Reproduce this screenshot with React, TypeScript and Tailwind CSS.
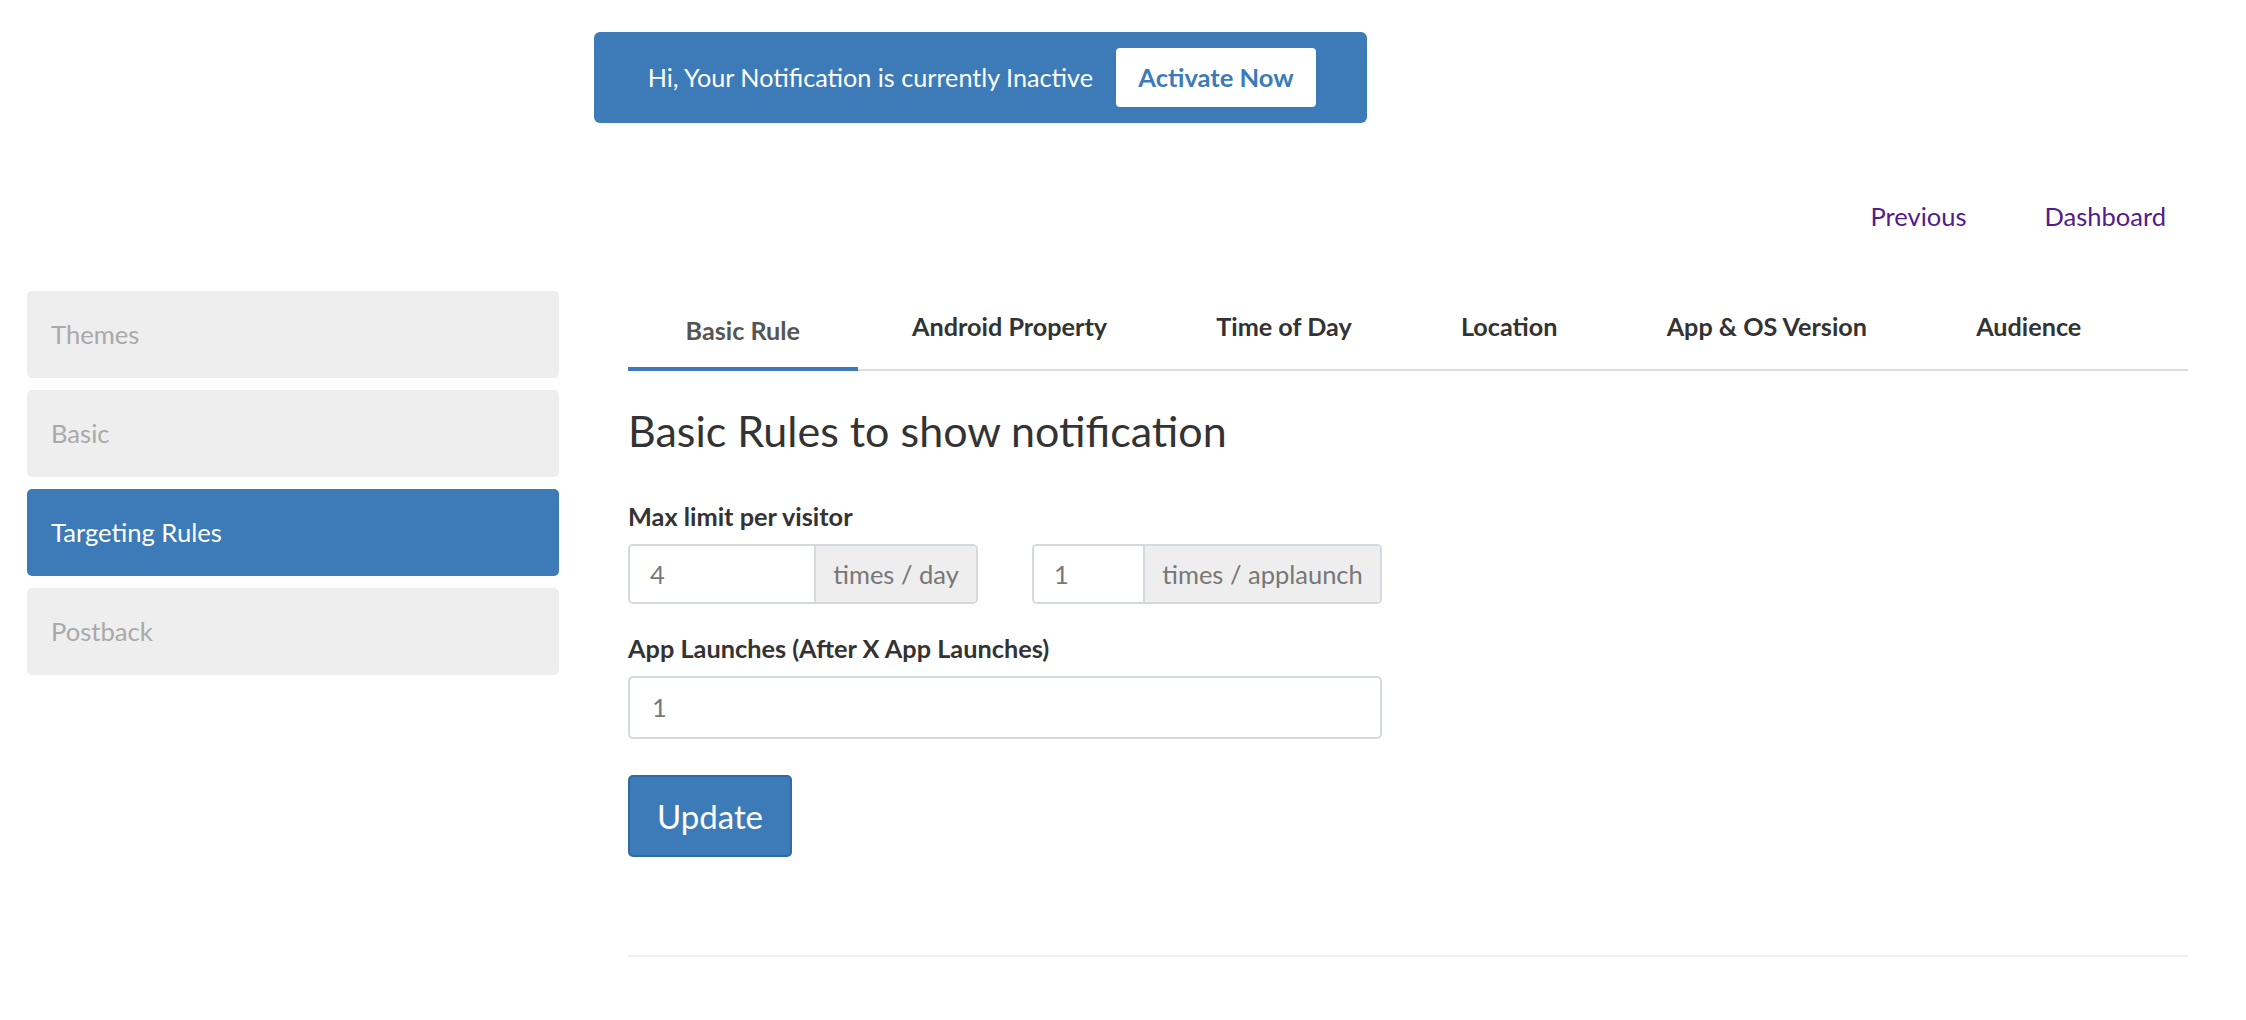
import React from "react";

const BLUE = "bg-[#3c7bb8]";

export default function App() {
  const tabs = ["Basic Rule", "Android Property", "Time of Day", "Location", "App & OS Version", "Audience"];
  const side = ["Themes", "Basic", "Targeting Rules", "Postback"];
  return (
    <div className="min-h-screen w-full bg-white font-['Lato','Open_Sans',sans-serif] text-[#333]">
      {/* banner */}
      <div className="pt-[32px] pl-[594px]">
        <div className={`w-[773px] h-[91px] ${BLUE} rounded-[6px] flex items-center justify-end pr-[51px] gap-[23px]`}>
          <span className="text-white text-[25.2px] leading-none">Hi, Your Notification is currently Inactive</span>
          <button className="w-[200px] h-[59px] bg-white rounded-[4px] text-[#3c7bb8] font-bold text-[25.5px] leading-none">
            Activate Now
          </button>
        </div>
      </div>

      {/* nav links */}
      <div className="mt-[73px] h-[40px] flex items-center justify-end pr-[80px] gap-[78px] text-[25.5px] text-[#551a8b]">
        <a>Previous</a>
        <a>Dashboard</a>
      </div>

      {/* main */}
      <div className="mt-[55px] flex">
        <div className="ml-[27px] w-[532px] flex flex-col gap-[12px]">
          {side.map((s) => (
            <div
              key={s}
              className={`h-[87px] rounded-[5px] pl-[24px] flex items-center text-[25.6px] ${
                s === "Targeting Rules" ? "bg-[#3c7bb8] text-white" : "bg-[#eeeeee] text-[#a9a9a9]"
              }`}
            >
              {s}
            </div>
          ))}
        </div>

        <div className="ml-[69px] w-[1560px] flex flex-col">
          <div className="flex border-b-2 border-[#dddddd]">
            {tabs.map((t, i) => (
              <div
                key={t}
                className={`h-[80px] -mb-[2px] flex items-center font-bold text-[25.2px] leading-none ${
                  i === 0
                    ? "px-[57.5px] border-b-4 border-[#3c7bb8] rounded-t-[3px] text-[#555] pt-[4px]"
                    : "px-[54.6px] text-[#333] pb-[8px]"
                }`}
              >
                {t}
              </div>
            ))}
          </div>

          <h3 className="mt-[33px] h-[52px] flex items-center text-[43px] leading-none font-normal text-[#333]">
            Basic Rules to show notification
          </h3>

          <div className="mt-[46px] h-[30px] flex items-center font-bold text-[25.3px] leading-none">Max limit per visitor</div>

          <div className="mt-[12px] flex gap-[54px]">
            <div className="flex w-[350px] h-[60px] border-2 border-[#d4d9df] rounded-[5px] overflow-hidden">
              <div className="w-[184px] flex items-center pl-[20px] text-[25.5px] text-[#777] bg-white">4</div>
              <div className="flex-1 flex items-center justify-center bg-[#eeeeee] border-l-2 border-[#d4d9df] text-[25.5px] text-[#777]">
                times / day
              </div>
            </div>
            <div className="flex w-[350px] h-[60px] border-2 border-[#d4d9df] rounded-[5px] overflow-hidden">
              <div className="w-[109px] flex items-center pl-[20px] text-[25.5px] text-[#777] bg-white">1</div>
              <div className="flex-1 flex items-center justify-center bg-[#eeeeee] border-l-2 border-[#d4d9df] text-[25.5px] text-[#777]">
                times / applaunch
              </div>
            </div>
          </div>

          <div className="mt-[30px] h-[30px] flex items-center font-bold text-[25.3px] leading-none">
            App Launches (After X App Launches)
          </div>

          <div className="mt-[12px] w-[754px] h-[63px] border-2 border-[#d4d9df] rounded-[5px] flex items-center pl-[22px] text-[25.5px] text-[#777]">
            1
          </div>

          <div className="mt-[36px]">
            <button className="h-[82px] w-[164px] bg-[#3c7bb8] border-2 border-[#2f6aa3] rounded-[5px] text-white text-[33px] leading-none">
              Update
            </button>
          </div>

          <div className="mt-[98px] h-[2px] bg-[#eeeeee]" />
        </div>
      </div>
    </div>
  );
}
